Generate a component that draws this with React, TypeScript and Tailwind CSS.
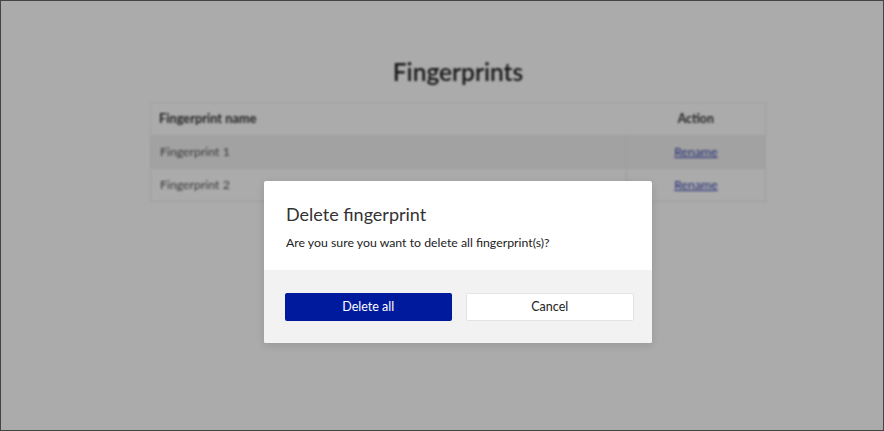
import React from 'react';

const rows = ['Fingerprint 1', 'Fingerprint 2'];

const FingerprintTable: React.FC = () => (
  <div className="flex flex-col items-center pt-[55px] pl-[32px] blur-[1px]">
    <h1 className="text-[24.5px] font-semibold leading-[32px] text-[#222]">Fingerprints</h1>
    <table className="mt-[14px] w-[616px] border-collapse text-[12.3px]">
      <thead>
        <tr className="h-[33px] border border-[#f0f0f0]">
          <th className="pl-[8px] text-left text-[12.8px] font-bold text-[#333]">Fingerprint name</th>
          <th className="w-[139px] text-center font-bold text-[#333]">Action</th>
        </tr>
      </thead>
      <tbody>
        {rows.map((name, i) => (
          <tr key={name} className={`h-[33px] border border-[#ececec] ${i === 0 ? 'bg-[#f2f2f2]' : 'bg-white'}`}>
            <td className="pl-[9px] text-[#555]">{name}</td>
            <td className="border-l border-[#ececec] text-center">
              <a href="#" className="text-[#2a3ba8] underline">Rename</a>
            </td>
          </tr>
        ))}
      </tbody>
    </table>
  </div>
);

const DeleteDialog: React.FC = () => (
  <div className="w-[388px] overflow-hidden rounded-[2px] bg-white shadow-[0_2px_8px_rgba(0,0,0,0.12)]">
    <div className="px-[22px] pt-[21px] pb-[17px]">
      <h2 className="text-[18px] leading-[24px] text-[#333]">Delete fingerprint</h2>
      <p className="mt-[7px] text-[12.3px] leading-[20px] text-[#222]">
        Are you sure you want to delete all fingerprint(s)?
      </p>
    </div>
    <div className="flex gap-[14px] bg-[#f2f2f2] pl-[21px] pr-[18px] pt-[23px] pb-[22px]">
      <button className="h-[28px] flex-1 rounded-[2px] bg-[#001a9e] text-[12.5px] text-white">
        Delete all
      </button>
      <button className="h-[28px] flex-1 rounded-[2px] border border-[#e3e3e3] bg-white text-[12.5px] text-[#222]">
        Cancel
      </button>
    </div>
  </div>
);

export default function App() {
  return (
    <div
      className="relative h-[431px] w-[884px] overflow-hidden border border-[#444] bg-white"
      style={{ fontFamily: 'Lato, "Noto Sans", sans-serif' }}
    >
      <FingerprintTable />
      <div className="absolute inset-0 flex items-start justify-center bg-black/[0.33] pt-[180px] pl-[32px]">
        <DeleteDialog />
      </div>
    </div>
  );
}
